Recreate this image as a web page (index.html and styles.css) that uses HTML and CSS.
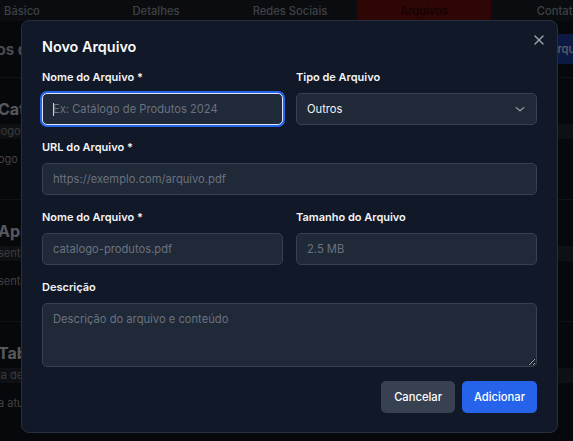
FILE: index.html
```html
<!DOCTYPE html>
<html lang="pt-BR">
<head>
<meta charset="utf-8">
<title>Novo Arquivo</title>
<link rel="stylesheet" href="styles.css">
</head>
<body>
<div class="page">
  <nav class="tabs">
    <div class="tab">Básico</div>
    <div class="tab">Detalhes</div>
    <div class="tab">Redes Sociais</div>
    <div class="tab active">Arquivos</div>
    <div class="tab">Contato</div>
  </nav>
  <main class="content">
    <header class="content-head">
      <h2 class="content-title">Arquivos do Perfil</h2>
      <button class="new-btn" type="button">+ Novo Arquivo</button>
    </header>
    <section class="card">
      <h3 class="card-title">Catálogo de Produtos</h3>
      <div class="card-strip">logo · catálogo completo em PDF</div>
      <p class="card-desc">ogo de produtos atualizado</p>
    </section>
    <section class="card">
      <h3 class="card-title">Apresentação Institucional</h3>
      <div class="card-strip">sentação da empresa</div>
      <p class="card-desc">sentação institucional em slides</p>
    </section>
    <section class="card">
      <h3 class="card-title">Tabela de Preços</h3>
      <div class="card-strip">la de preços 2024</div>
      <p class="card-desc">a atualizada mensalmente</p>
    </section>
  </main>
</div>

<div class="overlay">
  <div class="modal">
    <button class="close" type="button" aria-label="Fechar">
      <svg viewBox="0 0 24 24" width="16" height="16" fill="none" stroke="currentColor" stroke-width="2" stroke-linecap="round"><path d="M18 6 6 18"/><path d="m6 6 12 12"/></svg>
    </button>
    <h3 class="modal-title">Novo Arquivo</h3>
    <form class="form">
      <div class="grid2">
        <div class="field">
          <label class="label">Nome do Arquivo *</label>
          <div class="caret-wrap"><input class="input focused" type="text" placeholder="Ex: Catálogo de Produtos 2024"></div>
        </div>
        <div class="field">
          <label class="label">Tipo de Arquivo</label>
          <div class="select">
            <span>Outros</span>
            <svg viewBox="0 0 12 12" width="12" height="12" fill="none" stroke="currentColor" stroke-width="1.2" stroke-linecap="round" stroke-linejoin="round"><path d="M2.2 4.6 6 7.8l3.8-3.2"/></svg>
          </div>
        </div>
      </div>
      <div class="field">
        <label class="label">URL do Arquivo *</label>
        <input class="input" type="text" placeholder="https://exemplo.com/arquivo.pdf">
      </div>
      <div class="grid2">
        <div class="field">
          <label class="label">Nome do Arquivo *</label>
          <input class="input" type="text" placeholder="catalogo-produtos.pdf">
        </div>
        <div class="field">
          <label class="label">Tamanho do Arquivo</label>
          <input class="input" type="text" placeholder="2.5 MB">
        </div>
      </div>
      <div class="field">
        <label class="label">Descrição</label>
        <textarea class="input textarea" placeholder="Descrição do arquivo e conteúdo"></textarea>
      </div>
      <div class="actions">
        <button class="btn btn-secondary" type="button">Cancelar</button>
        <button class="btn btn-primary" type="button">Adicionar</button>
      </div>
    </form>
  </div>
</div>
</body>
</html>
```

FILE: styles.css
```css
html, body {
  margin: 0;
  padding: 0;
  overflow: hidden;
  width: 573px;
  height: 441px;
}

body {
  background: #13161c;
  font-family: "Inter", "Noto Sans", "DejaVu Sans", sans-serif;
  color: #e5e7eb;
}

/* ---------- background page ---------- */
.page {
  width: 670px;
  margin-left: -45px;
}

.tabs {
  display: flex;
  height: 21px;
  background: #1b1e27;
}

.tab {
  flex: none;
  width: 134px;
  text-align: center;
  font-size: 11.2px;
  font-weight: 500;
  line-height: 22px;
  color: #9ca3af;
}

.tab.active {
  background: #741010;
  color: #2e0707;
}

.content-head {
  display: flex;
  align-items: center;
  justify-content: space-between;
  height: 56px;
  padding: 0 22px 0 0;
  border-bottom: 1px solid #2b2f38;
}

.content-title {
  margin: 0 0 0 -7px;
  font-size: 15px;
  font-weight: 700;
  color: #b9bdc6;
}

.new-btn {
  height: 30px;
  padding: 0 12px;
  border: 0;
  border-radius: 5px;
  background: #1e40a8;
  color: #e3ebff;
  font-family: inherit;
  font-size: 11.2px;
  font-weight: 500;
}

.card {
  padding: 23px 0 32px 43px;
  border-bottom: 1px solid #2b2f38;
}

.card-title {
  margin: 0;
  font-size: 16px;
  line-height: 16px;
  font-weight: 700;
  color: #d7dbe3;
}

.card-strip {
  margin-top: 7px;
  height: 15px;
  line-height: 15px;
  font-size: 11px;
  color: #8f949d;
  background: #262a32;
}

.card-desc {
  margin: 12px 0 0;
  font-size: 11px;
  line-height: 16px;
  color: #9ca0a8;
}

/* ---------- overlay + modal ---------- */
.overlay {
  position: fixed;
  inset: 0;
  background: rgba(0, 0, 0, 0.6);
  display: flex;
  align-items: flex-start;
  padding: 20px 0 0 21px;
}

.modal {
  position: relative;
  box-sizing: border-box;
  width: 537px;
  height: 413px;
  background: #111827;
  border: 1px solid #262f3d;
  border-radius: 8px;
  padding: 17px 20px 20px;
}

.close {
  position: absolute;
  top: 11px;
  right: 10px;
  width: 16px;
  height: 16px;
  padding: 0;
  border: 0;
  background: none;
  color: #9ca3af;
  display: flex;
}

.modal-title {
  margin: 0 0 13px;
  font-size: 14.4px;
  line-height: 18px;
  font-weight: 600;
  color: #f9fafb;
}

.form {
  display: flex;
  flex-direction: column;
  gap: 14px;
}

.grid2 {
  display: grid;
  grid-template-columns: 1fr 1fr;
  gap: 13px;
}

.field {
  display: flex;
  flex-direction: column;
}

.label {
  display: block;
  margin-bottom: 8px;
  font-size: 11px;
  line-height: 16px;
  font-weight: 600;
  color: #f3f4f6;
}

.input {
  box-sizing: border-box;
  width: 100%;
  height: 32px;
  margin: 0;
  padding: 0 10px;
  background: #1f2937;
  border: 1px solid #374151;
  border-radius: 5px;
  font-family: inherit;
  font-size: 11.2px;
  color: #e5e7eb;
  outline: none;
}

.input::placeholder {
  color: #6b7280;
  opacity: 1;
}

.input.focused {
  border-color: #dfe7ff;
  box-shadow: 0 0 0 2px #2563eb;
}

.caret-wrap {
  position: relative;
}

.caret-wrap::after {
  content: "";
  position: absolute;
  left: 11px;
  top: 10px;
  width: 1px;
  height: 13px;
  background: #cfd3da;
}

.select {
  box-sizing: border-box;
  height: 32px;
  padding: 0 10px;
  display: flex;
  align-items: center;
  justify-content: space-between;
  background: #1f2937;
  border: 1px solid #374151;
  border-radius: 5px;
  font-size: 11.2px;
  color: #f3f4f6;
}

.select svg {
  color: #9ca3af;
}

.textarea {
  height: 64px;
  padding: 7px 10px;
  line-height: 16px;
  resize: vertical;
  display: block;
}

.actions {
  display: flex;
  justify-content: flex-end;
  gap: 7px;
  margin-top: 0;
}

.btn {
  height: 32px;
  padding: 0 13px;
  border: 0;
  border-radius: 5px;
  font-family: inherit;
  font-size: 11.2px;
  font-weight: 500;
  color: #ffffff;
}

.btn-secondary {
  background: #374151;
}

.btn-primary {
  background: #2563eb;
  padding: 0 12px;
}
```
